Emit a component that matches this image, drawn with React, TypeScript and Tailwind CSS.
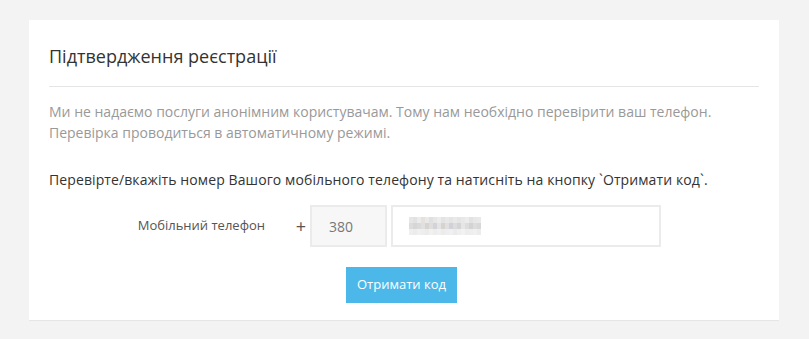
import React from 'react';

const blur = [
  ['#e6e6e6', '#e2e2e2', '#ebebeb', '#e4e1df', '#e9e9e9', '#e0e0e3', '#e6e6e6', '#ececec', '#e3e3e3', '#e8e8e8', '#e4e4e6', '#e9e9e9', '#e5e5e5', '#e8e8e8', '#ececec', '#e2e2e4', '#e7e7e7', '#e9e9e9'],
  ['#dcdcdc', '#d6d6d6', '#dadada', '#e0e0e0', '#d8d3cf', '#dedede', '#d4d4d8', '#e4e4e4', '#d9d3d0', '#e0e0e0', '#d0d2d8', '#dcdcdc', '#d4d4d6', '#e6e6e6', '#dddddd', '#d3d3d6', '#dcdcdc', '#d8d8d8'],
  ['#efefef', '#ececec', '#f0f0f0', '#eeeeee', '#ebebeb', '#f1f1f1', '#ededed', '#f0f0f0', '#ececec', '#eeeeee', '#f0f0f0', '#ebebeb', '#efefef', '#f2f2f2', '#ededed', '#eeeeee', '#f0f0f0', '#ececec'],
];

export default function App() {
  return (
    <div className="min-h-screen bg-[#f3f3f3] px-[29px] pt-[20px] font-['Open_Sans',sans-serif]">
      <div className="w-[750px] bg-white border-b border-[#e6e6e6] px-[20px] pt-[23px] pb-[17px]">
        <h1 className="text-[18px] leading-[26px] text-[#333]">Підтвердження реєстрації</h1>
        <div className="mt-[17px] border-t border-[#e5e5e5]" />
        <p className="mt-[14px] text-[14px] leading-[21px] text-[#999]">
          Ми не надаємо послуги анонімним користувачам. Тому нам необхідно перевірити ваш телефон.
          <br />
          Перевірка проводиться в автоматичному режимі.
        </p>
        <p className="mt-[26px] text-[14px] leading-[21px] text-[#333] tracking-[0.1px]">
          Перевірте/вкажіть номер Вашого мобільного телефону та натисніть на кнопку `Отримати код`.
        </p>
        <div className="mt-[15px] flex items-center">
          <div className="w-[216px] text-right text-[13px] text-[#555]">Мобільний телефон</div>
          <div className="w-[45px] text-right pr-[4px] text-[18px] leading-none text-[#555]">+</div>
          <div className="w-[77px] h-[42px] border-2 border-[#ebebeb] bg-[#f7f7f7] pl-[17px] flex items-center text-[14px] text-[#777]">
            380
          </div>
          <div className="ml-[4px] w-[270px] h-[42px] border-2 border-[#ebebeb] bg-white pl-[16px] flex items-center">
            <div className="flex flex-col">
              {blur.map((row, i) => (
                <div key={i} className="flex">
                  {row.map((c, j) => (
                    <div key={j} className="w-[4px] h-[6px]" style={{ backgroundColor: c }} />
                  ))}
                </div>
              ))}
            </div>
          </div>
        </div>
        <div className="mt-[20px] ml-[297px]">
          <button className="w-[111px] h-[36px] bg-[#4bb8e9] text-white text-[13px]">Отримати код</button>
        </div>
      </div>
    </div>
  );
}
